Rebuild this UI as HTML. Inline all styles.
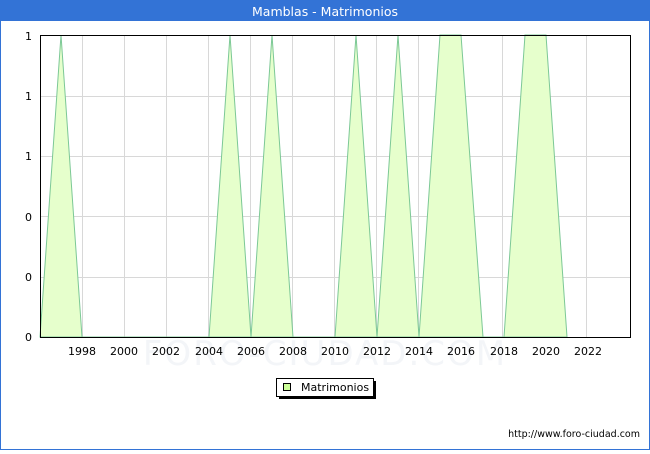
<!DOCTYPE html>
<html><head><style>
body{margin:0;width:650px;height:450px;overflow:hidden;font-family:"DejaVu Sans","Liberation Sans",sans-serif;}
</style></head><body>
<svg width="650" height="450" xmlns="http://www.w3.org/2000/svg" font-family="DejaVu Sans, Liberation Sans, sans-serif">
<rect x="0.5" y="0.5" width="649" height="449" fill="#fff" stroke="#3373d6"/>
<rect x="0" y="0" width="650" height="21" fill="#3373d6"/>
<text x="325" y="16" fill="#fff" font-size="12.5" text-anchor="middle">Mamblas - Matrimonios</text>
<text x="325" y="365" fill="#f3f5f8" font-size="34" text-anchor="middle" letter-spacing="2">FORO-CIUDAD.COM</text>
<g stroke="#d8d8d8" stroke-width="1">
<line x1="40" y1="96.5" x2="630" y2="96.5"/><line x1="40" y1="156.5" x2="630" y2="156.5"/><line x1="40" y1="216.5" x2="630" y2="216.5"/><line x1="40" y1="277.5" x2="630" y2="277.5"/>
<line x1="82.5" y1="35" x2="82.5" y2="337"/><line x1="124.5" y1="35" x2="124.5" y2="337"/><line x1="166.5" y1="35" x2="166.5" y2="337"/><line x1="208.5" y1="35" x2="208.5" y2="337"/><line x1="250.5" y1="35" x2="250.5" y2="337"/><line x1="292.5" y1="35" x2="292.5" y2="337"/><line x1="334.5" y1="35" x2="334.5" y2="337"/><line x1="376.5" y1="35" x2="376.5" y2="337"/><line x1="418.5" y1="35" x2="418.5" y2="337"/><line x1="460.5" y1="35" x2="460.5" y2="337"/><line x1="502.5" y1="35" x2="502.5" y2="337"/><line x1="544.5" y1="35" x2="544.5" y2="337"/><line x1="586.5" y1="35" x2="586.5" y2="337"/>
</g>
<polygon fill="#e6ffcc" stroke="#7cc896" stroke-width="1" points="40,337 61,35 82,337 209,337 230,35 251,337 272,35 293,337 335,337 356,35 377,337 398,35 419,337 440,35 461,35 483,337 504,337 525,35 546,35 567,337"/>
<rect x="40.5" y="35.5" width="590" height="302" fill="none" stroke="#000"/>
<g font-size="11" fill="#000" text-anchor="end">
<text x="32" y="40">1</text><text x="32" y="100">1</text><text x="32" y="160">1</text><text x="32" y="221">0</text><text x="32" y="281">0</text><text x="32" y="341">0</text>
</g>
<g font-size="11" fill="#000" text-anchor="middle">
<text x="82" y="355">1998</text><text x="124" y="355">2000</text><text x="166" y="355">2002</text><text x="209" y="355">2004</text><text x="251" y="355">2006</text><text x="293" y="355">2008</text><text x="335" y="355">2010</text><text x="377" y="355">2012</text><text x="419" y="355">2014</text><text x="461" y="355">2016</text><text x="504" y="355">2018</text><text x="546" y="355">2020</text><text x="588" y="355">2022</text>
</g>
<rect x="279" y="381" width="97" height="18" fill="#000"/>
<rect x="276.5" y="378.5" width="97" height="18" fill="#fff" stroke="#000"/>
<rect x="283.5" y="383.5" width="7" height="7" fill="#ccff99" stroke="#000"/>
<text x="301" y="391" font-size="11">Matrimonios</text>
<text x="640" y="437" font-size="9.5" text-anchor="end">http://www.foro-ciudad.com</text>
</svg>
</body></html>
